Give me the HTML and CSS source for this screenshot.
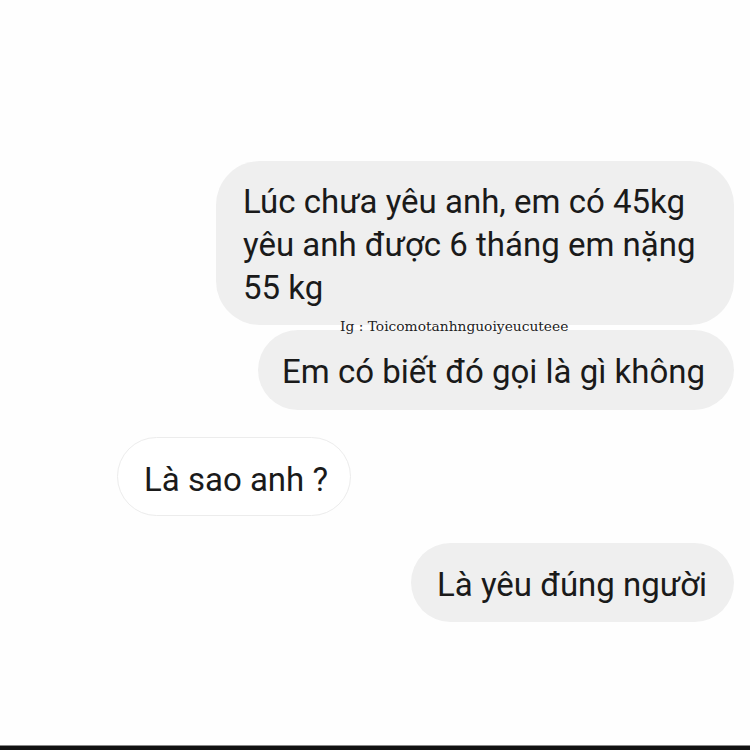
FILE: index.html
```html
<!DOCTYPE html>
<html lang="vi">
<head>
<meta charset="utf-8">
<link rel="stylesheet" href="styles.css">
</head>
<body>
<main class="chat">
  <div class="row row-right">
    <div class="bubble bubble-gray bubble-multi">Lúc chưa yêu anh, em có 45kg<br>yêu anh được 6 tháng em nặng<br>55 kg</div>
  </div>
  <div class="row row-right row-tight">
    <div class="bubble bubble-gray bubble-b2">Em có biết đó gọi là gì không</div>
    <span class="watermark">Ig : Toicomotanhnguoiyeucuteee</span>
  </div>
  <div class="row row-left">
    <div class="bubble bubble-white">Là sao anh ?</div>
  </div>
  <div class="row row-right">
    <div class="bubble bubble-gray bubble-b4">Là yêu đúng người</div>
  </div>
</main>
<div class="bottom-bar"></div>
</body>
</html>
```
FILE: styles.css
```css
html, body {
  margin: 0;
  padding: 0;
  background: #fefefe;
  width: 750px;
  height: 750px;
  overflow: hidden;
}
body {
  display: flex;
  flex-direction: column;
  font-family: Roboto, "Noto Sans", sans-serif;
  color: #1a1a1a;
}
.chat {
  flex: 1;
  display: flex;
  flex-direction: column;
  padding: 161px 16px 0 117px;
  gap: 27px;
}
.row {
  display: flex;
  position: relative;
}
.row-right { justify-content: flex-end; }
.row-left { justify-content: flex-start; }
.row-tight { margin-top: -22px; }
.bubble {
  font-size: 33px;
  line-height: 43px;
  padding: 20px 26px 16px 26px;
  border-radius: 40px;
  white-space: nowrap;
  box-sizing: border-box;
}
.bubble-gray { background: #efefef; }
.bubble-multi {
  width: 518px;
  padding: 19px 27px 16px 27px;
  border-radius: 44px;
}
.bubble-b2 { width: 476px; height: 80px; padding-left: 24px; }
.bubble-white {
  background: #ffffff;
  border: 1px solid #ececec;
  width: 234px;
  height: 79px;
}
.bubble-b4 { width: 323px; height: 79px; }
.watermark {
  position: absolute;
  left: 223px;
  top: -11px;
  font-family: "DejaVu Serif", serif;
  font-size: 13.8px;
  line-height: 14px;
  color: #222;
}
.bottom-bar {
  height: 4px;
  background: #111;
  border-top: 1px solid #888;
}
```
